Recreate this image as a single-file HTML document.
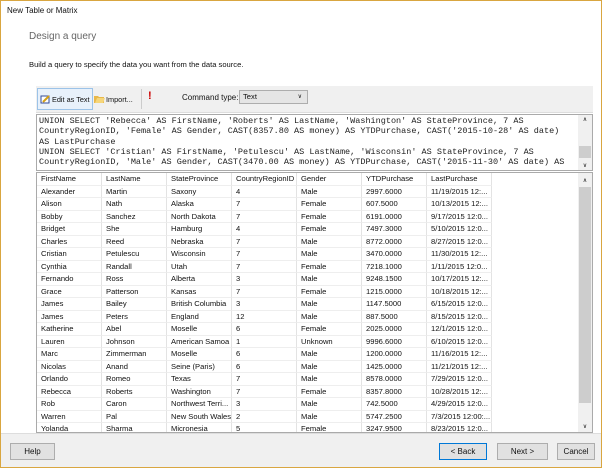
<!DOCTYPE html>
<html><head><style>
*{box-sizing:border-box;margin:0;padding:0}
body{width:602px;height:468px;overflow:hidden;font-family:"Liberation Sans",sans-serif;font-size:8px;color:#111;background:#fff}
.win{position:absolute;left:0;top:0;width:602px;height:468px;border:1px solid #d9a640;background:#fff}
.abs{position:absolute}
.t{white-space:nowrap}
.btn{position:absolute;height:17px;border:1px solid #adadad;background:#e1e1e1;text-align:center;line-height:15px;font-size:8px}
.sql{font-family:"Liberation Mono",monospace;font-size:8.5px;line-height:10.3px;white-space:pre;color:#222}
.grid{position:absolute;left:35px;top:171px;width:557px;height:261px;border:1px solid #aaa;background:#fff;overflow:hidden}
.row{position:absolute;left:0;height:12.5px;font-size:7.6px;line-height:12.5px}
.row span{position:absolute;top:0;height:12.5px;border-right:1px solid #e3e3e3;border-bottom:1px solid #eee;padding-left:4px;width:65px;overflow:hidden;white-space:nowrap}
</style></head><body>
<div class="win">
<div class="abs t" style="left:6px;top:5px;font-size:8px">New Table or Matrix</div>
<div class="abs t" style="left:28px;top:30px;font-size:10px;color:#666">Design a query</div>
<div class="abs t" style="left:28px;top:59px;font-size:7.6px">Build a query to specify the data you want from the data source.</div>
<div class="abs" style="left:35px;top:85px;width:557px;height:27px;background:#f0f0f0;border-bottom:1px solid #ddd"></div>
<div class="abs" style="left:36px;top:87px;width:56px;height:22px;border:1px solid #9cc3e8;background:#e8f1fb"></div>
<svg class="abs" style="left:39px;top:93px" width="11" height="11"><rect x="1" y="2" width="8" height="7" fill="#fff" stroke="#324b9a"/><path d="M3 8 L9 2" stroke="#d4a017" stroke-width="2"/></svg>
<div class="abs t" style="left:51px;top:94px;font-size:7.3px">Edit as Text</div>
<svg class="abs" style="left:93px;top:93px" width="11" height="10"><path d="M0 2h4l1 1h5v6H0z" fill="#e8b84a"/><path d="M1 9l2-5h8l-2 5z" fill="#f6d67a"/></svg>
<div class="abs t" style="left:105px;top:94px;font-size:7.3px">Import...</div>
<div class="abs" style="left:140px;top:88px;width:1px;height:20px;background:#ccc"></div>
<div class="abs t" style="left:147px;top:89px;color:#c00;font-weight:bold;font-size:11px">!</div>
<div class="abs t" style="left:181px;top:92px">Command type:</div>
<div class="abs" style="left:238px;top:89px;width:69px;height:14px;border:1px solid #adadad;background:#e5e5e5;font-size:7.6px;line-height:12px;padding-left:3px">Text<span style="position:absolute;right:5px;top:0;font-size:6px">&#8744;</span></div>
<div class="abs" style="left:35px;top:113px;width:557px;height:57px;border:1px solid #aaa;background:#fff;overflow:hidden">
<div class="sql" style="position:absolute;left:2px;top:1px">UNION SELECT 'Rebecca' AS FirstName, 'Roberts' AS LastName, 'Washington' AS StateProvince, 7 AS
CountryRegionID, 'Female' AS Gender, CAST(8357.80 AS money) AS YTDPurchase, CAST('2015-10-28' AS date)
AS LastPurchase
UNION SELECT 'Cristian' AS FirstName, 'Petulescu' AS LastName, 'Wisconsin' AS StateProvince, 7 AS
CountryRegionID, 'Male' AS Gender, CAST(3470.00 AS money) AS YTDPurchase, CAST('2015-11-30' AS date) AS</div>
<div style="position:absolute;right:0;top:0;width:14px;height:55px;background:#f0f0f0"><div style="position:absolute;top:31px;left:1px;width:12px;height:12px;background:#cdcdcd"></div><div style="position:absolute;top:1px;width:14px;text-align:center;font-size:6px">&#8743;</div><div style="position:absolute;bottom:1px;width:14px;text-align:center;font-size:6px">&#8744;</div></div>
</div>
<div class="grid">
<div style="position:absolute;right:0;top:0;width:14px;height:259px;background:#f0f0f0"><div style="position:absolute;top:14px;left:1px;width:12px;height:216px;background:#cdcdcd"></div><div style="position:absolute;top:4px;width:14px;text-align:center;font-size:6px">&#8743;</div><div style="position:absolute;bottom:2px;width:14px;text-align:center;font-size:6px">&#8744;</div></div>
<div id="rows"></div>
</div>
<div class="abs" style="left:0;top:432px;width:600px;height:34px;background:#f0f0f0;border-top:1px solid #ddd"></div>
<div class="btn" style="left:9px;top:442px;width:45px">Help</div>
<div class="btn" style="left:438px;top:442px;width:48px;border-color:#0078d7">&lt; Back</div>
<div class="btn" style="left:496px;top:442px;width:51px">Next &gt;</div>
<div class="btn" style="left:556px;top:442px;width:38px">Cancel</div>
</div>
<script>
var d=[["FirstName","LastName","StateProvince","CountryRegionID","Gender","YTDPurchase","LastPurchase"],
["Alexander","Martin","Saxony","4","Male","2997.6000","11/19/2015 12:..."],
["Alison","Nath","Alaska","7","Female","607.5000","10/13/2015 12:..."],
["Bobby","Sanchez","North Dakota","7","Female","6191.0000","9/17/2015 12:0..."],
["Bridget","She","Hamburg","4","Female","7497.3000","5/10/2015 12:0..."],
["Charles","Reed","Nebraska","7","Male","8772.0000","8/27/2015 12:0..."],
["Cristian","Petulescu","Wisconsin","7","Male","3470.0000","11/30/2015 12:..."],
["Cynthia","Randall","Utah","7","Female","7218.1000","1/11/2015 12:0..."],
["Fernando","Ross","Alberta","3","Male","9248.1500","10/17/2015 12:..."],
["Grace","Patterson","Kansas","7","Female","1215.0000","10/18/2015 12:..."],
["James","Bailey","British Columbia","3","Male","1147.5000","6/15/2015 12:0..."],
["James","Peters","England","12","Male","887.5000","8/15/2015 12:0..."],
["Katherine","Abel","Moselle","6","Female","2025.0000","12/1/2015 12:0..."],
["Lauren","Johnson","American Samoa","1","Unknown","9996.6000","6/10/2015 12:0..."],
["Marc","Zimmerman","Moselle","6","Male","1200.0000","11/16/2015 12:..."],
["Nicolas","Anand","Seine (Paris)","6","Male","1425.0000","11/21/2015 12:..."],
["Orlando","Romeo","Texas","7","Male","8578.0000","7/29/2015 12:0..."],
["Rebecca","Roberts","Washington","7","Female","8357.8000","10/28/2015 12:..."],
["Rob","Caron","Northwest Terri...","3","Male","742.5000","4/29/2015 12:0..."],
["Warren","Pal","New South Wales","2","Male","5747.2500","7/3/2015 12:00:..."],
["Yolanda","Sharma","Micronesia","5","Female","3247.9500","8/23/2015 12:0..."]];
var h="";d.forEach(function(r,i){h+='<div class="row" style="top:'+(i*12.5)+'px">';r.forEach(function(c,j){h+='<span style="left:'+(j*65)+'px">'+c+'</span>'});h+='</div>'});
document.getElementById("rows").innerHTML=h;
</script>
</body></html>
